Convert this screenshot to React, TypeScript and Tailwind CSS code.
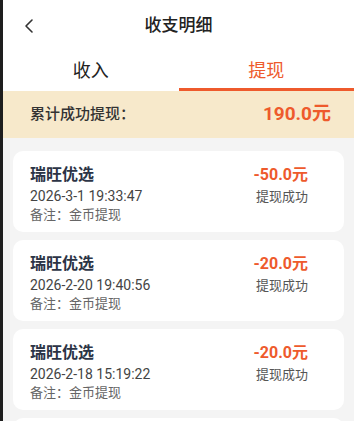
import { ChevronLeft } from 'lucide-react'

const records = [
    { name: '瑞旺优选', amount: '-50.0元', time: '2026-3-1 19:33:47', note: '金币提现' },
    { name: '瑞旺优选', amount: '-20.0元', time: '2026-2-20 19:40:56', note: '金币提现' },
    { name: '瑞旺优选', amount: '-20.0元', time: '2026-2-18 15:19:22', note: '金币提现' },
]

export default function App() {
    return (
        <div
            className="flex h-[421px] w-[354px] overflow-hidden bg-[#f4f4f4]"
            style={{ fontFamily: 'Roboto, "Noto Sans CJK SC", sans-serif' }}
        >
            <div className="w-[3px] shrink-0 bg-[#1e1e1e]" />
            <div className="flex min-w-0 flex-1 flex-col">
                {/* header */}
                <div className="relative flex h-[52px] shrink-0 items-center justify-center bg-white">
                    <ChevronLeft className="absolute left-[14px] top-[14px] h-[24px] w-[24px] text-[#333]" strokeWidth={1.6} />
                    <span className="text-[17px] font-medium text-[#222]">收支明细</span>
                </div>

                {/* tabs */}
                <div className="flex h-[39px] shrink-0 bg-white">
                    <div className="flex flex-1 items-center justify-center pb-[3px] text-[18px] text-[#222]">收入</div>
                    <div className="flex flex-1 items-center justify-center border-b-[3px] border-[#ee5a2c] text-[18px] text-[#ee5a2c]">提现</div>
                </div>

                {/* summary */}
                <div className="flex h-[47px] shrink-0 items-center justify-between bg-[#f7e9cb] pl-[27px] pr-[23px]">
                    <span className="text-[15px] font-medium text-[#333]">累计成功提现：</span>
                    <span className="text-[19px] font-bold text-[#ee5a2c]">190.0元</span>
                </div>

                {/* list */}
                <div className="flex flex-col gap-[8px] px-[10px] pt-[13px]">
                    {records.map((r, i) => (
                        <div key={i} className="flex h-[81px] shrink-0 justify-between rounded-[10px] bg-white pl-[17px] pr-[36px] pt-[13px]">
                            <div className="flex flex-col">
                                <span className="text-[16px] font-bold leading-[22px] text-[#2c3446]">{r.name}</span>
                                <span className="text-[14px] leading-[20px] text-[#444]">{r.time}</span>
                                <span className="text-[13px] leading-[18px] text-[#666]">备注：{r.note}</span>
                            </div>
                            <div className="flex flex-col items-end">
                                <span className="text-[16px] font-bold leading-[22px] text-[#ee5a2c]">{r.amount}</span>
                                <span className="text-[13px] leading-[22px] text-[#555]">提现成功</span>
                            </div>
                        </div>
                    ))}
                    <div className="h-[81px] shrink-0 rounded-[10px] bg-white" />
                </div>
            </div>
        </div>
    )
}
